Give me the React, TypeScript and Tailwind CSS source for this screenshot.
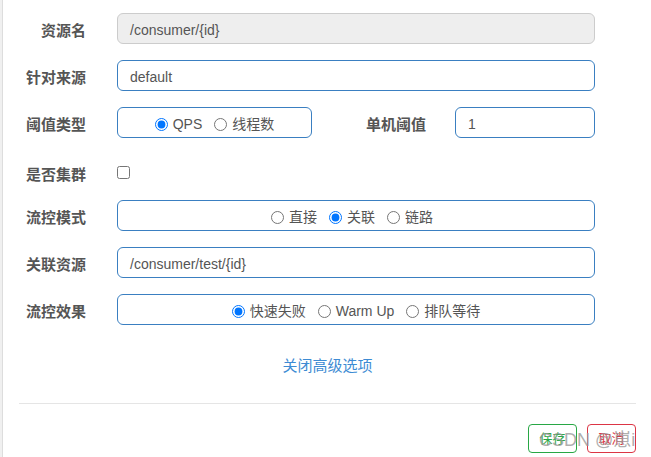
const font = { fontFamily: '"Liberation Sans", "Noto Sans CJK SC", sans-serif' }

function Label({ text, className = 'w-[83px]' }: { text: string; className?: string }) {
  return (
    <div className={`${className} shrink-0 pt-[5px] text-right text-[15px] font-bold text-[#555]`}>{text}</div>
  )
}

function Radio({ label, checked, name }: { label: string; checked?: boolean; name: string }) {
  return (
    <label className="flex items-center gap-[5px] text-[14px] text-[#555]">
      <input type="radio" name={name} defaultChecked={checked} className="m-0 h-[13px] w-[13px]" />
      {label}
    </label>
  )
}

const box = 'ml-[31px] flex h-[31px] items-center rounded-md border pt-[4px] text-[14px] text-[#555]'

export default function App() {
  return (
    <div className="relative flex h-[457px] w-[651px] overflow-hidden bg-white" style={font}>
      {/* sidebar edge */}
      <div className="w-[3px] shrink-0 border-r border-[#ddd] bg-[#f0f0f0]" />

      <div className="flex flex-col pt-[13px]">
        <div className="flex h-[31px] items-center">
          <Label text="资源名" />
          <div className={`${box} w-[478px] border-[#ccc] bg-[#eee] px-3`}>/consumer/{'{id}'}</div>
        </div>

        <div className="mt-4 flex h-[31px] items-center">
          <Label text="针对来源" />
          <div className={`${box} w-[478px] border-[#3a7fc1] px-3`}>default</div>
        </div>

        <div className="mt-4 flex h-[31px] items-center">
          <Label text="阈值类型" />
          <div className={`${box} w-[195px] justify-center gap-[12px] border-[#3a7fc1]`}>
            <Radio name="grade" label="QPS" checked />
            <Radio name="grade" label="线程数" />
          </div>
          <Label text="单机阈值" className="w-[114px]" />
          <div className={`${box} !ml-[29px] w-[140px] border-[#3a7fc1] px-3`}>1</div>
        </div>

        <div className="mt-[19px] flex h-[31px] items-center">
          <Label text="是否集群" />
          <input type="checkbox" className="m-0 ml-[31px] h-[13px] w-[13px]" />
        </div>

        <div className="mt-[12px] flex h-[31px] items-center">
          <Label text="流控模式" />
          <div className={`${box} w-[478px] justify-center gap-[12px] border-[#3a7fc1] pr-2`}>
            <Radio name="strategy" label="直接" />
            <Radio name="strategy" label="关联" checked />
            <Radio name="strategy" label="链路" />
          </div>
        </div>

        <div className="mt-4 flex h-[31px] items-center">
          <Label text="关联资源" />
          <div className={`${box} w-[478px] border-[#3a7fc1] px-3`}>/consumer/test/{'{id}'}</div>
        </div>

        <div className="mt-4 flex h-[31px] items-center">
          <Label text="流控效果" />
          <div className={`${box} w-[478px] justify-center gap-[12px] border-[#3a7fc1]`}>
            <Radio name="behavior" label="快速失败" checked />
            <Radio name="behavior" label="Warm Up" />
            <Radio name="behavior" label="排队等待" />
          </div>
        </div>

        <div className="ml-[16px] mt-[31px] w-[617px] text-center text-[15px] leading-5 text-[#3d8bd3]">
          关闭高级选项
        </div>

        <div className="ml-[16px] mt-[27px] h-px w-[617px] bg-[#e5e5e5]" />

        <div className="mt-[20px] flex w-[633px] justify-end gap-[10px]">
          <button className="flex h-[29px] w-[49px] items-center justify-center rounded border border-[#28a745] text-[13px] text-[#28a745]">
            保存
          </button>
          <button className="flex h-[29px] w-[49px] items-center justify-center rounded border border-[#dc3545] text-[13px] text-[#dc3545]">
            取消
          </button>
        </div>
      </div>

      {/* watermark */}
      <div className="pointer-events-none absolute left-[539px] top-[427px] whitespace-nowrap text-[18px] text-[#999]/80">
        CSDN @崽i
      </div>
    </div>
  )
}
